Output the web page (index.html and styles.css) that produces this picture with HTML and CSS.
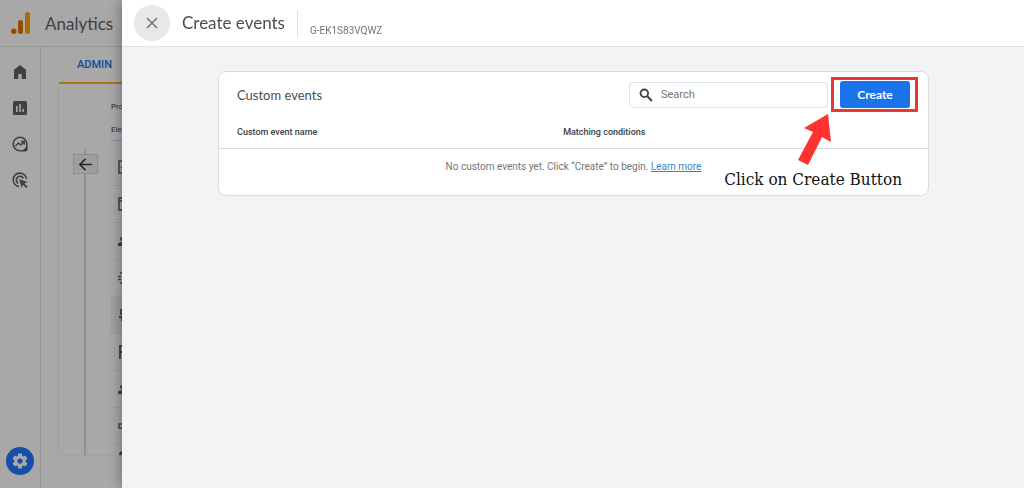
FILE: index.html
```html
<!DOCTYPE html>
<html lang="en">
<head>
  <meta charset="UTF-8">
  <meta name="viewport" content="width=device-width, initial-scale=1.0">
  <title>Analytics - Create events</title>
  <link rel="stylesheet" href="styles.css">
</head>
<body>
  <div class="app">
    <header class="app-header">
      <svg class="logo" viewBox="0 0 20 22" width="20" height="22">
        <rect x="14" y="0" width="5" height="22" rx="2.5" fill="#f9ab00"/>
        <rect x="7" y="8" width="5" height="14" rx="2.5" fill="#e37400"/>
        <circle cx="2.8" cy="19.3" r="2.7" fill="#e37400"/>
      </svg>
      <span class="app-name">Analytics</span>
    </header>

    <div class="app-body">
      <nav class="rail">
        <a href="#" aria-label="Home">
          <svg viewBox="0 0 16 16" width="16" height="16"><path d="M8 1 2 5.8V15h4.3v-5h3.4v5H14V5.8z"/></svg>
        </a>
        <a href="#" aria-label="Reports">
          <svg viewBox="0 0 16 16" width="16" height="16"><path fill-rule="evenodd" d="M2.5 1h11A1.5 1.5 0 0 1 15 2.5v11a1.5 1.5 0 0 1-1.5 1.5h-11A1.5 1.5 0 0 1 1 13.5v-11A1.5 1.5 0 0 1 2.5 1zM4 6v6h1.6V6zm3.2-2v8h1.6V4zm3.2 5v3H12V9z"/></svg>
        </a>
        <a href="#" aria-label="Explore">
          <svg viewBox="0 0 16 16" width="16" height="16"><path d="M8 1.2a6.800 6.800 0 1 0 0 13.600h5.300a1.500 1.500 0 0 0 1.500-1.500V8A6.800 6.800 0 0 0 8 1.200z" fill="none" stroke="currentColor" stroke-width="1.600"/><path d="M3.500 10 6.500 7l2.300 2 3-3M9 5.600h3.200v3.200" fill="none" stroke="currentColor" stroke-width="1.500"/><path d="M10.500 14.500 14.500 10.500v4z"/></svg>
        </a>
        <a href="#" aria-label="Advertising">
          <svg viewBox="0 0 16 16" width="16" height="16"><path d="M7 14.500A6.700 6.700 0 1 1 14.500 7M6.300 11.300A3.700 3.700 0 1 1 11.300 6.300" fill="none" stroke="currentColor" stroke-width="1.600"/><path d="m7 7 8.500 3-3.200 1.400 3.200 3.200-1.300 1.300-3.200-3.200L9.700 16z"/></svg>
        </a>
        <button class="admin-button" type="button" aria-label="Admin">
          <svg viewBox="0 0 24 24" width="18" height="18"><path d="M19.400 13a7.500 7.500 0 0 0 0-2l2.100-1.600a.5.5 0 0 0 .1-.6l-2-3.500a.5.5 0 0 0-.6-.2l-2.500 1a7.300 7.300 0 0 0-1.700-1l-.4-2.700A.5.5 0 0 0 14 2h-4a.5.5 0 0 0-.5.4l-.4 2.700a7.700 7.700 0 0 0-1.700 1l-2.500-1a.5.5 0 0 0-.6.2l-2 3.500a.5.5 0 0 0 .1.600L4.600 11a7.900 7.900 0 0 0 0 2l-2.100 1.600a.5.5 0 0 0-.1.600l2 3.500c.1.200.4.300.6.200l2.500-1a7.300 7.300 0 0 0 1.700 1l.4 2.700c0 .2.200.4.400.4h4c.3 0 .5-.2.500-.4l.4-2.700a7.700 7.700 0 0 0 1.700-1l2.500 1c.2.100.5 0 .6-.2l2-3.500a.5.5 0 0 0-.1-.600zM12 15.500a3.500 3.500 0 1 1 0-7 3.500 3.500 0 0 1 0 7z"/></svg>
        </button>
      </nav>

      <main class="admin">
        <div class="tabs"><a class="tab" href="#">ADMIN</a></div>
        <div class="columns">
          <div class="divider">
            <button class="back" type="button" aria-label="Back">
              <svg viewBox="0 0 16 16" width="15" height="15"><path d="M15 8H2.500M8 2 2 8l6 6" fill="none" stroke="currentColor" stroke-width="1.700"/></svg>
            </button>
          </div>
          <div class="property">
            <p class="property-label">Property</p>
            <p class="property-name">Electronics</p>
            <ul class="property-menu">
              <li><svg viewBox="0 0 14 14" width="14" height="14"><path d="M1 1h12v12H1zM3 7l3 3 5-6" fill="none" stroke="currentColor" stroke-width="1.500"/></svg></li>
              <li><svg viewBox="0 0 14 14" width="14" height="14"><path d="M1 1h12v12H1zM1 4h12" fill="none" stroke="currentColor" stroke-width="1.500"/></svg></li>
              <li><svg viewBox="0 0 14 14" width="14" height="14"><circle cx="4" cy="5" r="2"/><circle cx="10" cy="5" r="2"/><path d="M0 12V9.500Q4 6.500 7 9q3-2.500 7 .5V12z"/></svg></li>
              <li><svg viewBox="0 0 14 14" width="14" height="14"><path d="M2 2h10M0 5.500h14M0 8.500h14M2 12h10" stroke="currentColor" stroke-width="1.600" stroke-dasharray="3 1"/></svg></li>
              <li class="active"><svg viewBox="0 0 14 14" width="14" height="14"><path d="M3 1v5h8M1 9h3v4M7 12h6" fill="none" stroke="currentColor" stroke-width="1.800"/></svg></li>
              <li><svg viewBox="0 0 14 14" width="14" height="14"><path d="M2 14V1h10M2 7h8" fill="none" stroke="currentColor" stroke-width="1.800"/></svg></li>
              <li><svg viewBox="0 0 14 14" width="14" height="14"><circle cx="4" cy="5" r="2"/><path d="M0 12V9.500Q4 6.500 8 9.500V12zM10 4h4v2h-4z"/></svg></li>
              <li><svg viewBox="0 0 14 14" width="14" height="14"><path d="M1 5h4l6-3v10l-6-3H1z" fill="none" stroke="currentColor" stroke-width="1.500"/></svg></li>
              <li class="cut"><svg viewBox="0 0 14 14" width="14" height="14"><circle cx="5" cy="7" r="4"/></svg></li>
            </ul>
          </div>
        </div>
      </main>
    </div>
  </div>

  <div class="scrim"></div>

  <section class="drawer" role="dialog" aria-labelledby="drawer-title">
    <header class="drawer-header">
      <button class="close" type="button" aria-label="Close">
        <svg viewBox="0 0 12 12" width="12" height="12"><path d="m1 1 10 10M11 1 1 11" stroke="currentColor" stroke-width="1.600"/></svg>
      </button>
      <h1 class="drawer-title" id="drawer-title">Create events</h1>
      <span class="stream-id">G-EK1S83VQWZ</span>
    </header>

    <div class="drawer-content">
      <div class="card">
        <div class="card-head">
          <h2 class="card-title">Custom events</h2>
          <div class="search">
            <label for="event-search">
              <svg viewBox="0 0 14 14" width="14" height="14" role="img" aria-label="Search"><circle cx="5.300" cy="5.300" r="3.800" fill="none" stroke="currentColor" stroke-width="1.800"/><path d="m8 8 5 5" stroke="currentColor" stroke-width="2"/></svg>
            </label>
            <input type="text" id="event-search" placeholder="Search">
          </div>
          <div class="highlight">
            <button class="create" type="button">Create</button>
          </div>
        </div>

        <table class="events">
          <thead>
            <tr><th>Custom event name</th><th>Matching conditions</th></tr>
          </thead>
          <tbody>
            <tr><td colspan="2">No custom events yet. Click “Create” to begin. <a href="#">Learn more</a></td></tr>
          </tbody>
        </table>

        <!-- Tutorial callout -->
        <svg class="arrow" viewBox="0 0 34 51" width="34" height="51"><path d="M30 0 33 28 24 23 10 51 0 46 15 18 6 14z"/></svg>
        <p class="callout">Click on Create Button</p>
      </div>
    </div>
  </section>
</body>
</html>
```

FILE: styles.css
```css
* {
  box-sizing: border-box;
}

body {
  margin: 0;
  height: 100vh;
  overflow: hidden;
  font-family: Roboto, "Liberation Sans", sans-serif;
  font-size: 11px;
  color: #3c4043;
}

h1, h2, p, ul {
  margin: 0;
  padding: 0;
  font-weight: 400;
}

button {
  padding: 0;
  border: none;
  cursor: pointer;
}

svg {
  display: block;
  fill: currentColor;
}

/* Page behind the drawer */
.app {
  display: flex;
  flex-direction: column;
  height: 100%;
  background-color: #fff;
}

.app-header {
  display: flex;
  align-items: center;
  gap: 14px;
  height: 47px;
  padding-left: 11px;
  border-bottom: 1px solid #e4e4e4;
}

.app-name {
  font-family: Lato, sans-serif;
  font-size: 17px;
  color: #5f6368;
}

.app-body {
  display: flex;
  flex: 1;
  min-height: 0;
}

.rail {
  display: flex;
  flex-direction: column;
  align-items: center;
  gap: 20px;
  width: 41px;
  padding: 17px 0 13px;
  border-right: 1px solid #e0e0e0;
}

.rail a {
  color: #5f6368;
}

.admin-button {
  display: grid;
  place-items: center;
  width: 28px;
  height: 28px;
  margin-top: auto;
  border-radius: 50%;
  background-color: #2478ff;
  color: #fff;
}

.admin {
  display: flex;
  flex-direction: column;
  flex: 1;
  padding: 0 18px 33px;
}

.tabs {
  display: flex;
  height: 37px;
}

.tab {
  display: flex;
  align-items: center;
  padding: 0 18px;
  border-bottom: 2px solid #f9ab00;
  font-weight: 500;
  color: #1a73e8;
  text-decoration: none;
}

.tabs::after {
  content: "";
  flex: 1;
  border-bottom: 2px solid #f9ab00;
}

.columns {
  display: flex;
  flex: 1;
  min-height: 0;
  overflow: hidden;
  background-color: #fff;
  box-shadow: 0 0 2px #ddd;
}

.divider {
  display: flex;
  flex-direction: column;
  align-items: center;
  width: 52px;
  padding-top: 65px;
}

.divider::before {
  content: "";
  width: 2px;
  height: 5px;
  background-color: #dadce0;
}

.divider::after {
  content: "";
  flex: 1;
  width: 2px;
  background-color: #dadce0;
}

.back {
  display: grid;
  place-items: center;
  width: 25px;
  height: 20px;
  border: 1px solid #d8d8d8;
  background-color: #f1f1f1;
  color: #3c4043;
}

.property {
  flex: 1;
  padding-top: 17px;
  font-size: 8px;
}

.property-label,
.property-name {
  height: 23px;
  line-height: 12px;
}

.property-name {
  height: 17px;
  margin-bottom: 8px;
  border-bottom: 1px solid #d0d0d0;
}

.property-menu {
  list-style: none;
}

.property-menu li {
  display: flex;
  align-items: center;
  height: 37px;
  padding-left: 7px;
  border-bottom: 1px solid #eee;
  color: #5f6368;
}

.property-menu .active {
  background-color: #f1f3f4;
}

.property-menu .cut {
  height: 20px;
}

.scrim {
  position: fixed;
  inset: 0;
  background-color: rgba(0, 0, 0, 0.34);
}

/* Drawer */
.drawer {
  position: fixed;
  inset: 0 0 0 122px;
  display: flex;
  flex-direction: column;
  background-color: #f1f3f4;
  box-shadow: 0 0 14px rgba(0, 0, 0, 0.4);
}

.drawer-header {
  display: flex;
  align-items: center;
  height: 47px;
  padding-left: 12px;
  border-bottom: 1px solid #e0e2e4;
  background-color: #fff;
}

.close {
  display: grid;
  place-items: center;
  width: 36px;
  height: 36px;
  border-radius: 50%;
  background-color: #e8e8e8;
  color: #757575;
}

.drawer-title {
  margin: 0 12px;
  font-family: Lato, sans-serif;
  font-size: 17px;
  line-height: 22px;
  color: #4a4d50;
}

.stream-id {
  height: 27px;
  padding: 15px 0 0 12px;
  border-left: 1px solid #e0e0e0;
  font-size: 10px;
  line-height: 12px;
  color: #757575;
}

.drawer-content {
  padding: 24px 95px 0 96px;
}

.card {
  position: relative;
  border: 1px solid #dadce0;
  border-radius: 8px;
  background-color: #fff;
}

.card-head {
  display: flex;
  align-items: center;
  gap: 12px;
  padding: 9px 18px;
}

.card-title {
  flex: 1;
  font-family: Lato, sans-serif;
  font-size: 13px;
  color: #4a4d50;
}

.search {
  display: flex;
  align-items: center;
  gap: 8px;
  width: 199px;
  height: 26px;
  padding-left: 9px;
  border: 1px solid #dfe1e5;
  border-radius: 4px;
  color: #3c4043;
}

.search input {
  flex: 1;
  min-width: 0;
  padding: 0;
  border: none;
  outline: none;
  background: none;
  font: inherit;
}

.search input::placeholder {
  color: #757575;
}

.highlight {
  position: relative;
}

.highlight::after {
  content: "";
  position: absolute;
  inset: -4px -8px -4px -9px;
  border: 3px solid #e53935;
  pointer-events: none;
}

.create {
  display: block;
  width: 70px;
  height: 27px;
  border-radius: 3px;
  background-color: #1a73e8;
  font-family: Lato, sans-serif;
  font-size: 12px;
  font-weight: 700;
  color: #fff;
}

.events {
  width: 100%;
  border-collapse: collapse;
}

.events th {
  width: 54%;
  height: 31px;
  padding: 0 0 0 18px;
  border-bottom: 1px solid #dadce0;
  font-size: 9px;
  font-weight: 500;
  text-align: left;
}

.events th:first-child {
  width: 46%;
}

.events td {
  height: 47px;
  padding: 0 0 10px;
  font-size: 10px;
  text-align: center;
  color: #757575;
}

.events a {
  color: #3f7fc9;
}

.arrow {
  position: absolute;
  top: 42px;
  right: 96px;
  color: #ff3131;
}

.callout {
  position: absolute;
  top: 96px;
  right: 26px;
  font-family: "DejaVu Serif Condensed", "DejaVu Serif", serif;
  font-size: 17px;
  line-height: 22px;
  color: #111;
}
```
